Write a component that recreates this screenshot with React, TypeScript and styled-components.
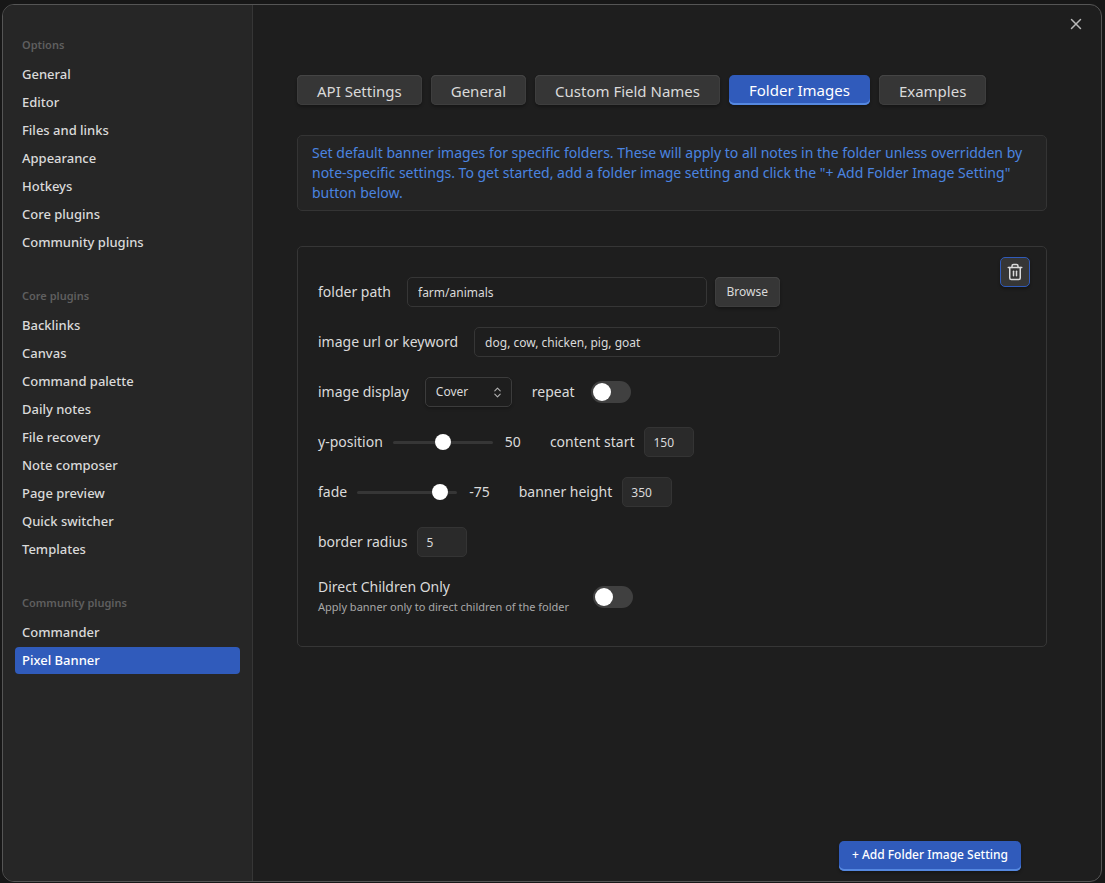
import React, { useId, useState } from "react";
import styled, { createGlobalStyle, css } from "styled-components";
import { ChevronsUpDown, Trash2, X } from "lucide-react";

const GlobalStyle = createGlobalStyle`
  *, *::before, *::after { box-sizing: border-box; }
  body {
    margin: 0;
    background: #171717;
    color: #dadada;
    font-family: "Noto Sans", "Open Sans", sans-serif;
    font-size: 14px;
    line-height: 20px;
  }
  button, input, select { font: inherit; color: inherit; margin: 0; }
`;

const Page = styled.div`
  display: flex;
  min-height: 100vh;
  padding: 4px 3px 1px 2px;
`;

const Modal = styled.div`
  flex: 1;
  display: flex;
  min-width: 0;
  background: #1e1e1e;
  border: 1px solid #555;
  border-radius: 12px;
  overflow: hidden;
`;

const Sidebar = styled.nav`
  flex: none;
  width: 250px;
  display: flex;
  flex-direction: column;
  gap: 25px;
  padding: 25px 12px;
  background: #262626;
  border-right: 1px solid #363636;
`;

const NavSection = styled.section`
  display: flex;
  flex-direction: column;
`;

const NavTitle = styled.h2`
  margin: 0;
  padding: 0 7px 1px;
  font-size: 11px;
  font-weight: 600;
  line-height: 30px;
  color: #5f5f5f;
`;

const NavList = styled.ul`
  display: flex;
  flex-direction: column;
  gap: 1px;
  margin: 0;
  padding: 0;
  list-style: none;
`;

const NavLink = styled.a<{ $active: boolean }>`
  display: block;
  padding: 0 7px;
  border-radius: 4px;
  font-size: 13px;
  font-weight: 500;
  line-height: 27px;
  text-decoration: none;
  color: ${(p) => (p.$active ? "#fff" : "#dadada")};
  background: ${(p) => (p.$active ? "#305bbb" : "transparent")};
`;

const Main = styled.main`
  flex: 1;
  min-width: 0;
  display: flex;
  flex-direction: column;
  padding-bottom: 10px;
`;

const TitleBar = styled.div`
  display: flex;
  justify-content: flex-end;
  height: 70px;
  padding: 7px 13px;
`;

const CloseButton = styled.button`
  display: grid;
  place-items: center;
  width: 24px;
  height: 24px;
  padding: 0;
  border: 0;
  background: none;
  color: #b8b8b8;
`;

const Content = styled.div`
  flex: 1;
  display: flex;
  flex-direction: column;
  padding: 0 54px 0 44px;
`;

const raised = css`
  height: 30px;
  border: 0;
  border-radius: 5px;
  background: #363636;
  box-shadow: inset 0 1px 0 #454545, inset 0 0 0 1px #3e3e3e, 0 2px 3px rgba(0, 0, 0, 0.3);
`;

const accent = css`
  color: #fff;
  background: #305bbb;
  box-shadow: inset 0 -2px 0 #5588e0, 0 2px 3px rgba(0, 0, 0, 0.3);
`;

const Tabs = styled.div`
  display: flex;
  flex-wrap: wrap;
  gap: 9px;
`;

const Tab = styled.button<{ $active: boolean }>`
  ${raised}
  padding: 2px 20px 0;
  font-size: 15px;
  ${(p) => p.$active && accent}
  ${(p) => p.$active && "padding-top: 0;"}
`;

const Notice = styled.p`
  margin: 30px 0 0;
  padding: 7px 14px;
  border: 1px solid #343434;
  border-radius: 5px;
  background: #242424;
  color: #4b84e0;
`;

const Card = styled.section`
  display: flex;
  justify-content: space-between;
  margin-top: 35px;
  padding: 10px 16px 9px 20px;
  border: 1px solid #363636;
  border-radius: 5px;
`;

const Fields = styled.div`
  flex: 0 1 462px;
  display: flex;
  flex-direction: column;
  gap: 20px;
  padding: 20px 0;
`;

const Row = styled.div<{ $gap?: number }>`
  display: flex;
  align-items: center;
  gap: ${(p) => p.$gap ?? 0}px;
  min-height: 30px;
`;

const Pair = styled.div<{ $gap?: number; $grow?: boolean }>`
  display: flex;
  align-items: center;
  gap: ${(p) => p.$gap ?? 16}px;
  flex: ${(p) => (p.$grow ? "1" : "none")};
  min-width: 0;
`;

const Label = styled.label`
  flex: none;
  white-space: nowrap;
`;

const TextInput = styled.input`
  flex: 1;
  min-width: 0;
  height: 30px;
  padding: 0 10px;
  border: 1px solid #363636;
  border-radius: 5px;
  background: #1e1e1e;
  font-size: 12px;
`;

const NumberInput = styled.input`
  width: 50px;
  height: 30px;
  padding: 0 8px;
  border: 1px solid #343434;
  border-radius: 5px;
  background: #2a2a2a;
  font-size: 12px;
  appearance: textfield;
  &::-webkit-inner-spin-button { appearance: none; }
`;

const SmallButton = styled.button`
  ${raised}
  flex: none;
  padding: 0 12px;
  font-size: 12px;
`;

const SelectBox = styled.div`
  display: grid;
  align-items: center;
  width: 87px;
  > * { grid-area: 1 / 1; }
  svg { justify-self: end; margin-right: 8px; color: #b3b3b3; pointer-events: none; }
`;

const Select = styled.select`
  appearance: none;
  width: 100%;
  height: 30px;
  padding: 0 10px;
  border: 1px solid #3c3c3c;
  border-radius: 5px;
  background: #1e1e1e;
  box-shadow: 0 2px 3px rgba(0, 0, 0, 0.2);
  font-size: 12px;
`;

const Toggle = styled.input`
  appearance: none;
  flex: none;
  width: 40px;
  height: 22px;
  padding: 2px;
  border-radius: 11px;
  background: #404040;
  &::before {
    content: "";
    display: block;
    width: 18px;
    height: 18px;
    border-radius: 50%;
    background: #fff;
  }
  &:checked { background: #305bbb; }
  &:checked::before { margin-left: 18px; }
`;

const Slider = styled.input`
  appearance: none;
  width: 100px;
  height: 16px;
  background: none;
  &::-webkit-slider-runnable-track {
    height: 3px;
    border-radius: 2px;
    background: #363636;
  }
  &::-webkit-slider-thumb {
    appearance: none;
    width: 16px;
    height: 16px;
    margin-top: -7px;
    border-radius: 50%;
    background: #fff;
  }
`;

const Value = styled.output`
  padding-left: 2px;
`;

const Stacked = styled.div`
  display: flex;
  flex-direction: column;
`;

const Hint = styled.span`
  font-size: 11px;
  color: #a8a8a8;
`;

const DeleteButton = styled.button`
  ${raised}
  display: grid;
  place-items: center;
  width: 30px;
  padding: 0;
  border: 1px solid #305bbb;
  box-shadow: 0 2px 3px rgba(0, 0, 0, 0.3);
`;

const AddButton = styled.button`
  ${raised}
  ${accent}
  align-self: flex-end;
  margin: auto 26px 0 0;
  padding: 0 13px 2px;
  font-size: 12px;
  font-weight: 500;
`;

const sections = [
  {
    title: "Options",
    items: ["General", "Editor", "Files and links", "Appearance", "Hotkeys", "Core plugins", "Community plugins"],
  },
  {
    title: "Core plugins",
    items: [
      "Backlinks",
      "Canvas",
      "Command palette",
      "Daily notes",
      "File recovery",
      "Note composer",
      "Page preview",
      "Quick switcher",
      "Templates",
    ],
  },
  { title: "Community plugins", items: ["Commander", "Pixel Banner"] },
];

const tabs = ["API Settings", "General", "Custom Field Names", "Folder Images", "Examples"];

function SliderField({ label, min, max, initial }: { label: string; min: number; max: number; initial: number }) {
  const id = useId();
  const [value, setValue] = useState(initial);
  return (
    <Pair $gap={10}>
      <Label htmlFor={id}>{label}</Label>
      <Slider id={id} type="range" min={min} max={max} value={value} onChange={(e) => setValue(Number(e.target.value))} />
      <Value htmlFor={id}>{value}</Value>
    </Pair>
  );
}

function NumberField({ label, initial }: { label: string; initial: number }) {
  const id = useId();
  return (
    <Pair $gap={10}>
      <Label htmlFor={id}>{label}</Label>
      <NumberInput id={id} type="number" defaultValue={initial} />
    </Pair>
  );
}

function FolderImageCard() {
  return (
    <Card>
      <Fields>
        <Row $gap={8}>
          <Pair $grow>
            <Label htmlFor="folder-path">folder path</Label>
            <TextInput id="folder-path" type="text" defaultValue="farm/animals" />
          </Pair>
          <SmallButton type="button">Browse</SmallButton>
        </Row>
        <Row>
          <Pair $grow>
            <Label htmlFor="image-source">image url or keyword</Label>
            <TextInput id="image-source" type="text" defaultValue="dog, cow, chicken, pig, goat" />
          </Pair>
        </Row>
        <Row $gap={20}>
          <Pair>
            <Label htmlFor="image-display">image display</Label>
            <SelectBox>
              <Select id="image-display" defaultValue="Cover">
                <option>Auto</option>
                <option>Cover</option>
                <option>Contain</option>
              </Select>
              <ChevronsUpDown size={13} strokeWidth={2} />
            </SelectBox>
          </Pair>
          <Pair>
            <Label htmlFor="repeat">repeat</Label>
            <Toggle id="repeat" type="checkbox" />
          </Pair>
        </Row>
        <Row $gap={29}>
          <SliderField label="y-position" min={0} max={100} initial={50} />
          <NumberField label="content start" initial={150} />
        </Row>
        <Row $gap={29}>
          <SliderField label="fade" min={-1500} max={100} initial={-75} />
          <NumberField label="banner height" initial={350} />
        </Row>
        <Row>
          <NumberField label="border radius" initial={5} />
        </Row>
        <Row>
          <Pair $gap={24}>
            <Stacked>
              <Label htmlFor="direct-children">Direct Children Only</Label>
              <Hint id="direct-children-hint">Apply banner only to direct children of the folder</Hint>
            </Stacked>
            <Toggle id="direct-children" type="checkbox" aria-describedby="direct-children-hint" />
          </Pair>
        </Row>
      </Fields>
      <DeleteButton type="button" aria-label="Delete folder image">
        <Trash2 size={18} strokeWidth={2} />
      </DeleteButton>
    </Card>
  );
}

export default function App() {
  const [tab, setTab] = useState("Folder Images");
  return (
    <Page>
      <GlobalStyle />
      <Modal role="dialog" aria-label="Settings">
        <Sidebar>
          {sections.map((section) => (
            <NavSection key={section.title}>
              <NavTitle>{section.title}</NavTitle>
              <NavList>
                {section.items.map((item) => (
                  <li key={item}>
                    <NavLink href="#" $active={item === "Pixel Banner"}>
                      {item}
                    </NavLink>
                  </li>
                ))}
              </NavList>
            </NavSection>
          ))}
        </Sidebar>
        <Main>
          <TitleBar>
            <CloseButton type="button" aria-label="Close">
              <X size={18} strokeWidth={2} />
            </CloseButton>
          </TitleBar>
          <Content>
            <Tabs role="tablist">
              {tabs.map((name) => (
                <Tab
                  key={name}
                  type="button"
                  role="tab"
                  aria-selected={name === tab}
                  $active={name === tab}
                  onClick={() => setTab(name)}
                >
                  {name}
                </Tab>
              ))}
            </Tabs>
            <Notice>
              Set default banner images for specific folders. These will apply to all notes in the folder unless
              overridden by note-specific settings. To get started, add a folder image setting and click the "+ Add
              Folder Image Setting" button below.
            </Notice>
            <FolderImageCard />
            <AddButton type="button">+ Add Folder Image Setting</AddButton>
          </Content>
        </Main>
      </Modal>
    </Page>
  );
}
